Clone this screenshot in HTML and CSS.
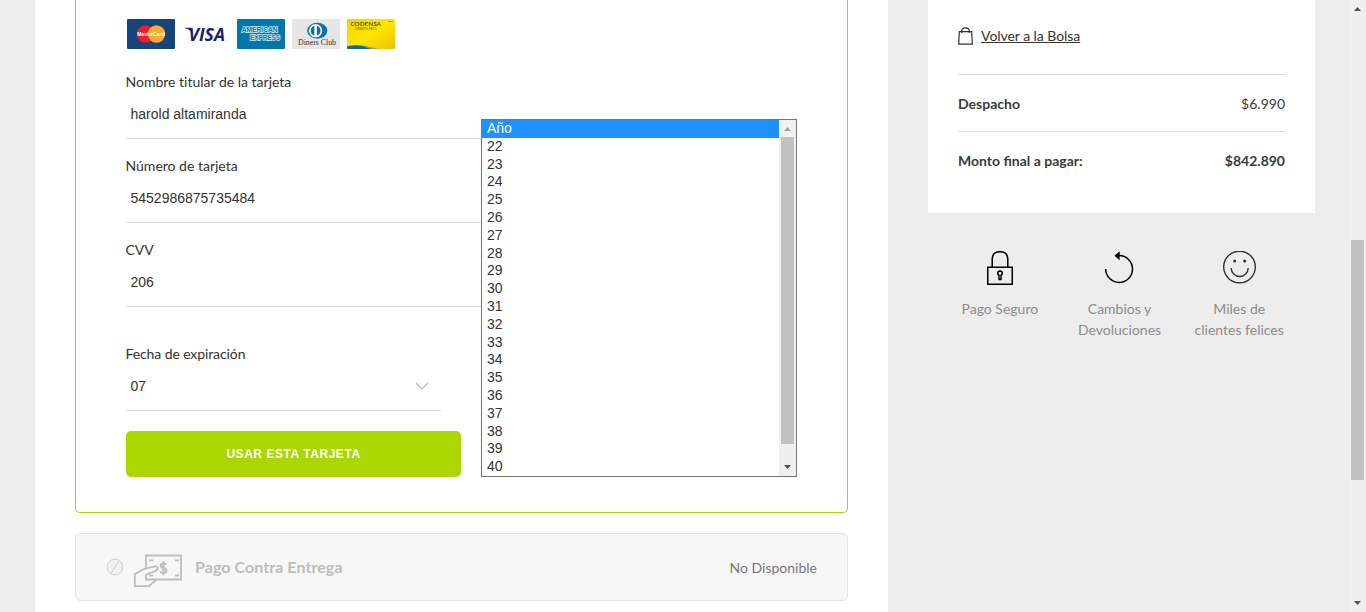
FILE: index.html
```html
<!DOCTYPE html>
<html lang="es">
<head>
<meta charset="utf-8">
<title>Pago</title>
<link rel="stylesheet" href="styles.css">
</head>
<body>
<div class="viewport">
  <main class="main">
    <section class="card">
      <div class="brands">
        <svg width="48" height="30" viewBox="0 0 48 30">
          <rect width="48" height="30" rx="1" fill="#16457c"/>
          <circle cx="18.500" cy="15" r="8.700" fill="#ed1c2e"/>
          <circle cx="29.500" cy="15" r="8.700" fill="#fbac33"/>
          <text class="logo-sans" x="10.200" y="17.200" font-size="6" textLength="27.500" lengthAdjust="spacingAndGlyphs" fill="#fff">MasterCard</text>
        </svg>
        <svg width="48" height="30" viewBox="0 0 48 30">
          <text class="logo-visa" x="6.500" y="22" font-size="18.500" font-style="italic" textLength="36.500" lengthAdjust="spacingAndGlyphs" fill="#1b1f71">VISA</text>
          <path d="M1.800 8.700H9L10.500 13.500Q7 9.800 1.800 8.700Z" fill="#1b1f71"/>
        </svg>
        <svg width="48" height="30" viewBox="0 0 48 30">
          <rect width="48" height="30" rx="1" fill="#0077a9"/>
          <g class="logo-sans" font-size="6.800" fill="#0077a9" stroke="#d5ecf5" stroke-width="1.400" paint-order="stroke">
            <text x="4.700" y="13.400" textLength="36" lengthAdjust="spacingAndGlyphs">AMERICAN</text>
            <text x="13" y="21.400" textLength="30" lengthAdjust="spacingAndGlyphs">EXPRESS</text>
          </g>
        </svg>
        <svg width="48" height="30" viewBox="0 0 48 30">
          <rect width="48" height="30" rx="1" fill="#e6e6e6"/>
          <ellipse cx="25.300" cy="11.700" rx="10" ry="8" fill="#0b71aa"/>
          <circle cx="23.600" cy="11.700" r="6.700" fill="#f2f5f7"/>
          <path d="M22.300 6.800A5.200 5.200 0 0 0 22.300 16.600ZM25 6.800A5.200 5.200 0 0 1 25 16.600Z" fill="#0b71aa"/>
          <text class="logo-serif" x="6" y="25.700" font-size="8.500" textLength="38" lengthAdjust="spacingAndGlyphs" fill="#333">Diners Club</text>
        </svg>
        <svg width="48" height="30" viewBox="0 0 48 30">
          <defs><linearGradient id="gold" x2="1" y2="1"><stop stop-color="#f5cf00"/><stop offset=".5" stop-color="#ffe600"/><stop offset="1" stop-color="#efc000"/></linearGradient></defs>
          <rect width="48" height="30" rx="1" fill="url(#gold)"/>
          <path d="M0 27.300Q13 24.500 28 30H1Q0 30 0 29Z" fill="#1767a5"/>
          <path d="M16 27.500Q24 27.400 32 30H24Z" fill="#8fa848"/>
          <text class="logo-round" x="3.500" y="7" font-size="6.400" textLength="30.500" lengthAdjust="spacingAndGlyphs" fill="#615b0a">CODENSA</text>
          <text class="logo-sans" x="8" y="11.300" font-size="3.500" textLength="22" lengthAdjust="spacingAndGlyphs" fill="#8b8711">CREDITO FACIL</text>
          <path d="M41 2.500H45.500" stroke="#938400" stroke-width=".8"/>
        </svg>
      </div>
      <form class="form">
        <div class="field"><div class="label">Nombre titular de la tarjeta</div><div class="value">harold altamiranda</div></div>
        <div class="field"><div class="label">Número de tarjeta</div><div class="value">5452986875735484</div></div>
        <div class="field"><div class="label">CVV</div><div class="value">206</div></div>
        <div class="field field-date"><div class="label label-date">Fecha de expiración</div>
          <div class="value">07
            <svg width="14" height="8" viewBox="0 0 14 8" fill="none" stroke="#b5b5b5" stroke-width="1.100"><path d="M1 1L7 7L13 1"/></svg>
          </div>
        </div>
        <button class="submit" type="button">USAR ESTA TARJETA</button>
      </form>
      <div class="dropdown">
        <ul class="options">
          <li class="selected">Año</li><li>22</li><li>23</li><li>24</li><li>25</li><li>26</li><li>27</li><li>28</li><li>29</li><li>30</li><li>31</li><li>32</li><li>33</li><li>34</li><li>35</li><li>36</li><li>37</li><li>38</li><li>39</li><li>40</li>
        </ul>
        <div class="list-scroll">
          <svg width="7" height="4" viewBox="0 0 7 4"><path d="M0 4L3.500 0L7 4Z" fill="#a3a3a3"/></svg>
          <div class="list-thumb"></div>
          <svg width="7" height="4" viewBox="0 0 7 4"><path d="M0 0L3.500 4L7 0Z" fill="#505050"/></svg>
        </div>
      </div>
    </section>
    <section class="cod">
      <svg width="18" height="18" viewBox="0 0 18 18" fill="#f0f0f0" stroke="#cfcfcf"><circle cx="9" cy="9" r="7.900"/><path d="M5.200 15L12.800 3"/></svg>
      <svg class="cash" width="50" height="34" viewBox="0 0 50 34" fill="none" stroke="#bdbdbd" stroke-width="1.800">
        <path d="M13 15V2.500H48V26.500H13V21"/>
        <path d="M16 7.300H20M42 7.300H46M42 22.500H46M16 22.500H20"/>
        <path stroke-width="2" d="M33.200 11.800Q32.500 10.500 30.500 10.500Q27.700 10.500 27.700 12.500Q27.700 14.500 30.500 15Q33.500 15.600 33.500 17.700Q33.500 20 30.500 20Q28 20 27.300 18.300M30.500 8.300V22.200"/>
        <path d="M23 27L16 33.100H1.800V21L11.500 15.800L22 13.400Q25 13.200 24.700 15.500Q24.400 17.300 21 18.700L13 21.500"/>
      </svg>
      <span class="cod-title">Pago Contra Entrega</span>
      <span class="cod-status">No Disponible</span>
    </section>
  </main>
  <aside class="side">
    <div class="summary">
      <div class="back">
        <svg class="bag" width="15" height="18" viewBox="0 0 15 18" fill="none" stroke="#333" stroke-width="1.200"><path d="M1.300 4.700H13.700L14.300 17.200H.7ZM3.700 6V4Q3.700 .8 7.500 .8Q11.300 .8 11.300 4V6"/></svg>
        <a class="back-link">Volver a la Bolsa</a>
      </div>
      <div class="row"><b>Despacho</b><span>$6.990</span></div>
      <div class="row"><b>Monto final a pagar:</b><b>$842.890</b></div>
    </div>
    <div class="benefits">
      <div class="benefit">
        <svg width="36" height="36" viewBox="0 0 36 36" fill="none" stroke="#000" stroke-width="1.500"><rect x="5.750" y="16.250" width="24.500" height="17"/><path d="M10.200 16V8.200Q10.200 .8 18 .8Q25.800 .8 25.800 8.200V16"/><path d="M17 24.300A2.300 2.300 0 1 1 19 24.300V28.500H17Z"/></svg>
        <span>Pago Seguro</span>
      </div>
      <div class="benefit">
        <svg width="36" height="36" viewBox="0 0 36 36" fill="none" stroke="#000" stroke-width="1.500"><path d="M3.700 18A13.400 13.400 0 1 0 17 4.600"/><path d="M12.500 4.800L17.700 .3V9.300Z" fill="#000" stroke="none"/></svg>
        <span>Cambios y<br>Devoluciones</span>
      </div>
      <div class="benefit">
        <svg width="36" height="36" viewBox="0 0 36 36" fill="none" stroke="#333" stroke-width="1.400"><circle cx="18.500" cy="16" r="15.800"/><path d="M10.200 17A8.400 8.400 0 0 0 27.200 17"/><circle cx="13.700" cy="10" r="1.500" fill="#333" stroke="none"/><circle cx="23.700" cy="10" r="1.500" fill="#333" stroke="none"/></svg>
        <span>Miles de<br>clientes felices</span>
      </div>
    </div>
  </aside>
  <div class="page-scroll">
    <svg width="7" height="4" viewBox="0 0 7 4"><path d="M0 4L3.500 0L7 4Z" fill="#505050"/></svg>
    <div class="page-thumb"></div>
    <svg class="down" width="7" height="4" viewBox="0 0 7 4"><path d="M0 0L3.500 4L7 0Z" fill="#505050"/></svg>
  </div>
</div>
</body>
</html>
```
FILE: styles.css
```css
* { box-sizing: border-box; }
body { margin: 0; background: #ededed; color: #333; font: 14px/20px Lato, sans-serif; overflow: hidden; }
svg { display: block; flex: none; }
.viewport { display: flex; height: 612px; padding-left: 35px; }
.main { width: 853px; background: #fff; padding: 0 40px; flex: none; }
.card { position: relative; height: 513px; border: 1px solid #abd600; border-top: 0; border-radius: 0 0 5px 5px; padding: 19px 50px 0; }
.brands { display: flex; gap: 7px; padding-left: 1px; height: 53px; }
.logo-sans { font-family: "Liberation Sans", sans-serif; font-weight: 700; }
.logo-visa { font-family: "Open Sans", sans-serif; font-weight: 700; }
.logo-round { font-family: Lato, sans-serif; font-weight: 700; }
.logo-serif { font-family: "Liberation Serif", serif; }
.form { display: flex; flex-direction: column; }
.field { width: 671px; height: 67px; margin-bottom: 17px; border-bottom: 1px solid #ddd; }
.field-date { width: 315px; margin: 20px 0 20px; }
.label { font-variant-ligatures: none; margin-left: -0.5px; }
.label-date { letter-spacing: -0.1px; }
.value { display: flex; align-items: center; justify-content: space-between; height: 20px; margin-top: 12px; padding: 0 12px 0 4.5px; font-family: "Liberation Sans", Arial, sans-serif; }
.submit { width: 335px; height: 46px; border: 0; border-radius: 5px; background: #abd600; color: #fff; font: 700 12px/20px "Liberation Sans", Arial, sans-serif; letter-spacing: 0.55px; padding: 0; }
.dropdown { position: absolute; left: 405px; top: 119px; width: 316px; height: 358px; display: flex; border: 1px solid #767676; background: #fff; }
.options { list-style: none; margin: 0; padding: 0; flex: 1; font: 14px/17.8px "Liberation Sans", Arial, sans-serif; }
.options li { height: 17.8px; padding-left: 5px; }
.options .selected { background: #1e90ff; color: #fff; }
.list-scroll { width: 17px; background: #f0f0f0; display: flex; flex-direction: column; align-items: center; padding-top: 7px; }
.list-thumb { width: 13px; height: 307px; background: #c1c1c1; margin: 6px 0 21px; }
.cod { display: flex; align-items: center; height: 68px; margin-top: 20px; padding: 0 30px; border: 1px solid #e5e5e5; border-radius: 5px; background: #f7f7f7; }
.cash { margin: 5px 12.5px 0 8.5px; }
.cod-title { font-size: 16px; font-weight: 700; color: #bdbdbd; letter-spacing: 0.07px; }
.cod-status { margin-left: auto; color: #777; padding-top: 1px; }
.side { width: 387px; margin-left: 40px; flex: none; }
.summary { height: 213px; background: #fff; padding: 0 30px; }
.back { display: flex; gap: 8px; height: 74px; padding-top: 26px; }
.bag { margin-top: 1px; }
.back-link { height: 20px; text-decoration: underline; letter-spacing: -0.05px; }
.row { display: flex; justify-content: space-between; height: 57px; padding-top: 19px; border-top: 1px solid #ddd; color: #3a3a3a; }
.benefits { display: flex; padding: 38px 12px 0; color: #8c8c8c; text-align: center; line-height: 21px; }
.benefit { width: 119.700px; display: flex; flex-direction: column; align-items: center; gap: 11px; }
.page-scroll { width: 17px; margin-left: auto; background: #f0f0f0; display: flex; flex-direction: column; align-items: center; padding: 7px 0; }
.page-thumb { width: 13px; height: 240px; background: #c1c1c1; margin-top: 229px; }
.down { margin-top: auto; }
```
